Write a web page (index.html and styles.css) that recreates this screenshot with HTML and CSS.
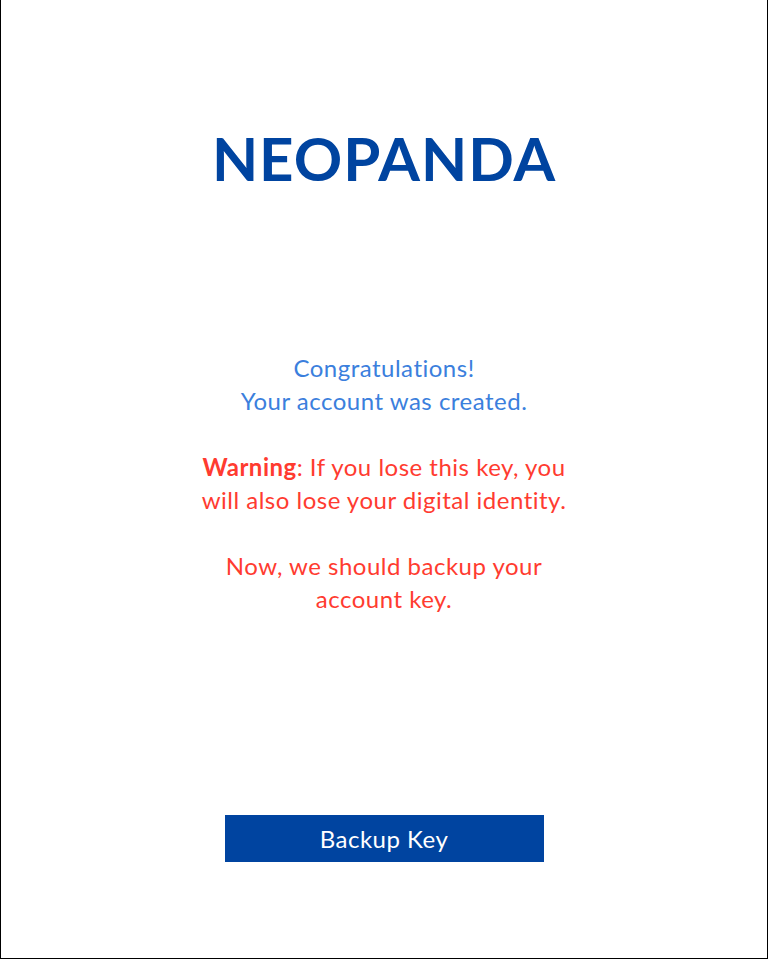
FILE: index.html
```html
<!DOCTYPE html>
<html lang="en">
<head>
<meta charset="utf-8">
<title>NEOPANDA</title>
<link rel="stylesheet" href="styles.css">
</head>
<body>
<main class="screen">
  <h1 class="brand">NEOPANDA</h1>
  <section class="messages">
    <p class="msg msg-info">Congratulations!<br>Your account was created.</p>
    <p class="msg msg-warn"><strong>Warning</strong>: If you lose this key, you<br>will also lose your digital identity.</p>
    <p class="msg msg-warn">Now, we should backup your<br>account key.</p>
  </section>
  <button class="btn-primary" type="button">Backup Key</button>
</main>
</body>
</html>
```

FILE: styles.css
```css
html, body {
  margin: 0;
  padding: 0;
  background: #ffffff;
}
.screen {
  box-sizing: border-box;
  width: 768px;
  height: 959px;
  border-left: 1px solid #000;
  border-right: 1px solid #000;
  border-bottom: 1px solid #000;
  display: flex;
  flex-direction: column;
  align-items: center;
  font-family: Lato, "Noto Sans", sans-serif;
}
.brand {
  margin: 126px 0 0;
  font-size: 60px;
  line-height: 64px;
  font-weight: 700;
  color: #0044a0;
  letter-spacing: 1px;
}
.messages {
  margin-top: 161px;
  display: flex;
  flex-direction: column;
  gap: 33px;
  text-align: center;
}
.msg {
  margin: 0;
  font-size: 24px;
  line-height: 33px;
  letter-spacing: 0.5px;
}
.msg-info { color: #3b7fdd; }
.msg-warn { color: #ff3b30; }
.msg-warn strong { font-weight: 700; }
.btn-primary {
  margin-top: auto;
  margin-bottom: 96px;
  width: 319px;
  height: 47px;
  border: 0;
  border-radius: 0;
  background: #0044a0;
  color: #ffffff;
  font-family: inherit;
  font-size: 24px;
  letter-spacing: 0.5px;
  padding: 0;
}
```
